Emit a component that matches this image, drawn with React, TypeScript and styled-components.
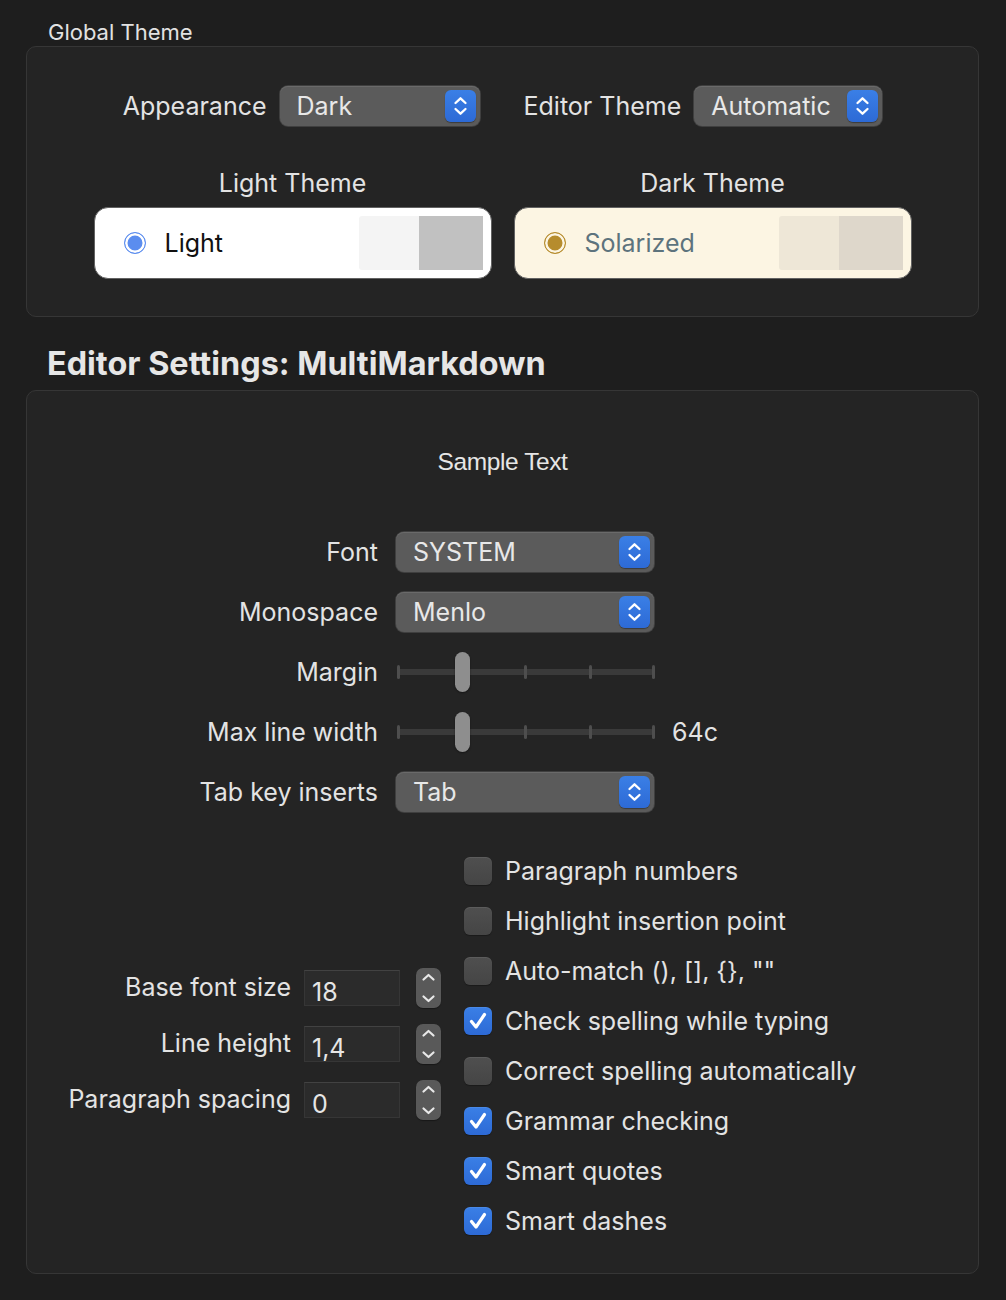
import styled, { createGlobalStyle } from 'styled-components';

const GlobalStyle = createGlobalStyle`
  html, body {
    margin: 0;
    padding: 0;
    background: #1e1e1e;
  }
  body {
    font-family: Inter, "Noto Sans", sans-serif;
    color: #e3e3e3;
    -webkit-font-smoothing: antialiased;
  }
  * {
    box-sizing: border-box;
  }
`;

export default function App() {
  return (
    <>
      <GlobalStyle />
      <Page>
        <GroupTitle>Global Theme</GroupTitle>
        <ThemeBox>
          <PopupRow>
            <Field>
              <Label>Appearance</Label>
              <Popup width={200} value="Dark" />
            </Field>
            <Field>
              <Label>Editor Theme</Label>
              <Popup width={188} value="Automatic" />
            </Field>
          </PopupRow>
          <CardRow>
            <CardColumn>
              <Label>Light Theme</Label>
              <ThemeCard bg="#ffffff">
                <Radio color="#5b8def" gap="#ffffff" />
                <CardName color="#111111">Light</CardName>
                <Swatches>
                  <Swatch color="#f4f4f4" />
                  <Swatch color="#c1c1c1" />
                </Swatches>
              </ThemeCard>
            </CardColumn>
            <CardColumn>
              <Label>Dark Theme</Label>
              <ThemeCard bg="#fcf5e3">
                <Radio color="#b68c2d" gap="#fcf5e3" />
                <CardName color="#5d737d">Solarized</CardName>
                <Swatches>
                  <Swatch color="#eee7d7" />
                  <Swatch color="#ded7cb" />
                </Swatches>
              </ThemeCard>
            </CardColumn>
          </CardRow>
        </ThemeBox>

        <SectionTitle>Editor Settings: MultiMarkdown</SectionTitle>
        <SettingsBox>
          <SampleText>Sample Text</SampleText>
          <FormGrid>
            <FormLabel>Font</FormLabel>
            <Popup width={258} value="SYSTEM" />
            <span />

            <FormLabel>Monospace</FormLabel>
            <Popup width={258} value="Menlo" />
            <span />

            <FormLabel>Margin</FormLabel>
            <Slider position={0.25} />
            <span />

            <FormLabel>Max line width</FormLabel>
            <Slider position={0.25} />
            <Label>64c</Label>

            <FormLabel>Tab key inserts</FormLabel>
            <Popup width={258} value="Tab" />
            <span />
          </FormGrid>

          <LowerSection>
            <StepperGroup>
              <NumberField label="Base font size" value="18" />
              <NumberField label="Line height" value="1,4" />
              <NumberField label="Paragraph spacing" value="0" />
            </StepperGroup>
            <CheckList>
              <Check label="Paragraph numbers" />
              <Check label="Highlight insertion point" />
              <Check label={'Auto-match (), [], {}, ""'} />
              <Check label="Check spelling while typing" checked />
              <Check label="Correct spelling automatically" />
              <Check label="Grammar checking" checked />
              <Check label="Smart quotes" checked />
              <Check label="Smart dashes" checked />
            </CheckList>
          </LowerSection>
        </SettingsBox>
      </Page>
    </>
  );
}

const Page = styled.div`
  width: 1006px;
  min-height: 1300px;
  padding: 19px 27px 0 26px;
  background: #1e1e1e;
`;

const GroupTitle = styled.div`
  margin-left: 22px;
  font-size: 22px;
  line-height: 26px;
  color: #e2e2e2;
`;

const Box = styled.div`
  background: #242424;
  border: 1px solid #363636;
  border-radius: 10px;
`;

const ThemeBox = styled(Box)`
  margin-top: 1px;
  padding: 39px 0 37px;
`;

const PopupRow = styled.div`
  display: flex;
  justify-content: center;
  gap: 44px;
`;

const Field = styled.div`
  display: flex;
  align-items: center;
  gap: 13px;
`;

const Label = styled.div`
  font-size: 25px;
  line-height: 32px;
  color: #e3e3e3;
  white-space: nowrap;
`;

const PopupLayout = styled.div<{ width: number }>`
  display: flex;
  align-items: center;
  width: ${({ width }) => width}px;
  height: 40px;
  padding: 0 4px 0 17px;
  background: #5b5b5b;
  border-radius: 8px;
  box-shadow: 0 0 0 1px #3f3f3f, inset 0 1px 0 #6a6a6a;
  font-size: 25px;
  color: #e8e8e8;
`;

const PopupValue = styled.span`
  flex: 1;
`;

const PopupButton = styled.div`
  width: 31px;
  height: 32px;
  border-radius: 6px;
  background: linear-gradient(#3a7fe6, #2d6ad6);
  box-shadow: 0 1px 1px rgba(0, 0, 0, 0.35);
  display: flex;
  align-items: center;
  justify-content: center;
`;

const Popup = ({ width, value }: { width: number; value: string }) => (
  <PopupLayout width={width}>
    <PopupValue>{value}</PopupValue>
    <PopupButton>
      <svg width="31" height="32" viewBox="0 0 31 32">
        <path
          d="M10.5 13 L15.5 8.3 L20.5 13 M10.5 19 L15.5 23.7 L20.5 19"
          fill="none"
          stroke="#ffffff"
          strokeWidth="2.3"
          strokeLinecap="round"
          strokeLinejoin="round"
        />
      </svg>
    </PopupButton>
  </PopupLayout>
);

const CardRow = styled.div`
  display: flex;
  justify-content: center;
  gap: 22px;
  margin-top: 41px;
`;

const CardColumn = styled.div`
  display: flex;
  flex-direction: column;
  align-items: center;
  gap: 8px;
`;

const ThemeCard = styled.div<{ bg: string }>`
  display: flex;
  align-items: center;
  width: 398px;
  height: 72px;
  padding: 0 8px 0 29px;
  background: ${({ bg }) => bg};
  border: 1.5px solid #626262;
  border-radius: 14px;
`;

const Radio = styled.span<{ color: string; gap: string }>`
  width: 22px;
  height: 22px;
  border-radius: 50%;
  border: 1.5px solid ${({ color }) => color};
  background: ${({ color }) => color};
  box-shadow: inset 0 0 0 2.5px ${({ gap }) => gap};
`;

const CardName = styled.span<{ color: string }>`
  margin-left: 19px;
  font-size: 25px;
  color: ${({ color }) => color};
`;

const Swatches = styled.div`
  display: flex;
  margin-left: auto;
  height: 54px;
`;

const Swatch = styled.div<{ color: string }>`
  width: 64px;
  height: 100%;
  background: ${({ color }) => color};
  &:first-child {
    width: 60px;
    border-radius: 3px 0 0 3px;
  }
`;

const SectionTitle = styled.div`
  margin: 24px 0 0 21px;
  font-size: 32.4px;
  line-height: 46px;
  font-weight: 700;
  color: #e6e6e6;
`;

const SettingsBox = styled(Box)`
  margin-top: 3px;
  padding: 55px 0 38px;
`;

const SampleText = styled.div`
  text-align: center;
  font-family: "Liberation Sans", Arial, sans-serif;
  font-size: 24.5px;
  line-height: 32px;
  letter-spacing: -0.4px;
  color: #e6e6e6;
`;

const FormGrid = styled.div`
  display: grid;
  grid-template-columns: 351px 258px auto;
  grid-auto-rows: 40px;
  column-gap: 18px;
  row-gap: 20px;
  align-items: center;
  margin-top: 54px;
`;

const FormLabel = styled(Label)`
  text-align: right;
`;

const SliderLayout = styled.div`
  position: relative;
  height: 40px;
  display: flex;
  align-items: center;
`;

const Track = styled.div`
  width: 100%;
  height: 6px;
  margin-left: 1px;
  border-radius: 3px;
  background: #3a3a3a;
`;

const Tick = styled.div`
  position: absolute;
  top: 13px;
  width: 3px;
  height: 14px;
  margin-left: -1px;
  border-radius: 1.5px;
  background: #4e4e4e;
`;

const Thumb = styled.div`
  position: absolute;
  top: 0;
  width: 15px;
  height: 40px;
  margin-left: -7px;
  border-radius: 8px;
  background: #8e8e8e;
  box-shadow: 0 1px 2px rgba(0, 0, 0, 0.4);
`;

const Slider = ({ position }: { position: number }) => (
  <SliderLayout>
    <Track />
    {[0, 0.25, 0.5, 0.75, 1].map((t) => (
      <Tick key={t} style={{ left: `calc(${t * 100}% + ${t === 0 ? 2 : t === 1 ? -1 : 0}px)` }} />
    ))}
    <Thumb style={{ left: `calc(${position * 100}% + 1px)` }} />
  </SliderLayout>
);

const LowerSection = styled.div`
  display: flex;
  align-items: center;
  margin-top: 45px;
`;

const StepperGroup = styled.div`
  display: flex;
  flex-direction: column;
  gap: 16px;
  padding-bottom: 4px;
`;

const NumberRow = styled.div`
  display: flex;
  align-items: center;
  height: 40px;
`;

const NumberLabel = styled(Label)`
  width: 264px;
  text-align: right;
  margin-top: -2px;
`;

const NumberInput = styled.div`
  width: 96px;
  height: 36px;
  margin-left: 13px;
  padding: 5px 0 0 7px;
  background: #2b2b2b;
  border: 1px solid #363636;
  border-top-color: #424242;
  font-size: 25px;
  line-height: 32px;
  color: #e6e6e6;
`;

const StepperButton = styled.div`
  width: 25px;
  height: 40px;
  margin-left: 16px;
  border-radius: 7px;
  background: #595959;
  box-shadow: 0 1px 1px rgba(0, 0, 0, 0.35);
`;

const NumberField = ({ label, value }: { label: string; value: string }) => (
  <NumberRow>
    <NumberLabel>{label}</NumberLabel>
    <NumberInput>{value}</NumberInput>
    <StepperButton>
      <svg width="25" height="40" viewBox="0 0 25 40">
        <path
          d="M7.5 11.5 L12.5 7 L17.5 11.5 M7.5 28.5 L12.5 33 L17.5 28.5"
          fill="none"
          stroke="#e8e8e8"
          strokeWidth="2.2"
          strokeLinecap="round"
          strokeLinejoin="round"
        />
      </svg>
    </StepperButton>
  </NumberRow>
);

const CheckList = styled.div`
  display: flex;
  flex-direction: column;
  gap: 22px;
  margin-left: 23px;
`;

const CheckRow = styled.div`
  display: flex;
  align-items: center;
  gap: 13px;
  height: 28px;
`;

const CheckBox = styled.div<{ checked: boolean }>`
  width: 28px;
  height: 28px;
  border-radius: 6px;
  background: ${({ checked }) =>
    checked ? 'linear-gradient(#3a7fe6, #2d6ad6)' : 'linear-gradient(#4f4f4f, #454545)'};
  box-shadow: inset 0 1px 0 rgba(255, 255, 255, 0.08), 0 1px 1px rgba(0, 0, 0, 0.3);
`;

const CheckText = styled(Label)``;

const Check = ({ label, checked = false }: { label: string; checked?: boolean }) => (
  <CheckRow>
    <CheckBox checked={checked}>
      {checked && (
        <svg width="28" height="28" viewBox="0 0 28 28">
          <path
            d="M7.5 14.5 L12 20 L20.5 7.5"
            fill="none"
            stroke="#ffffff"
            strokeWidth="3.2"
            strokeLinecap="round"
            strokeLinejoin="round"
          />
        </svg>
      )}
    </CheckBox>
    <CheckText>{label}</CheckText>
  </CheckRow>
);
